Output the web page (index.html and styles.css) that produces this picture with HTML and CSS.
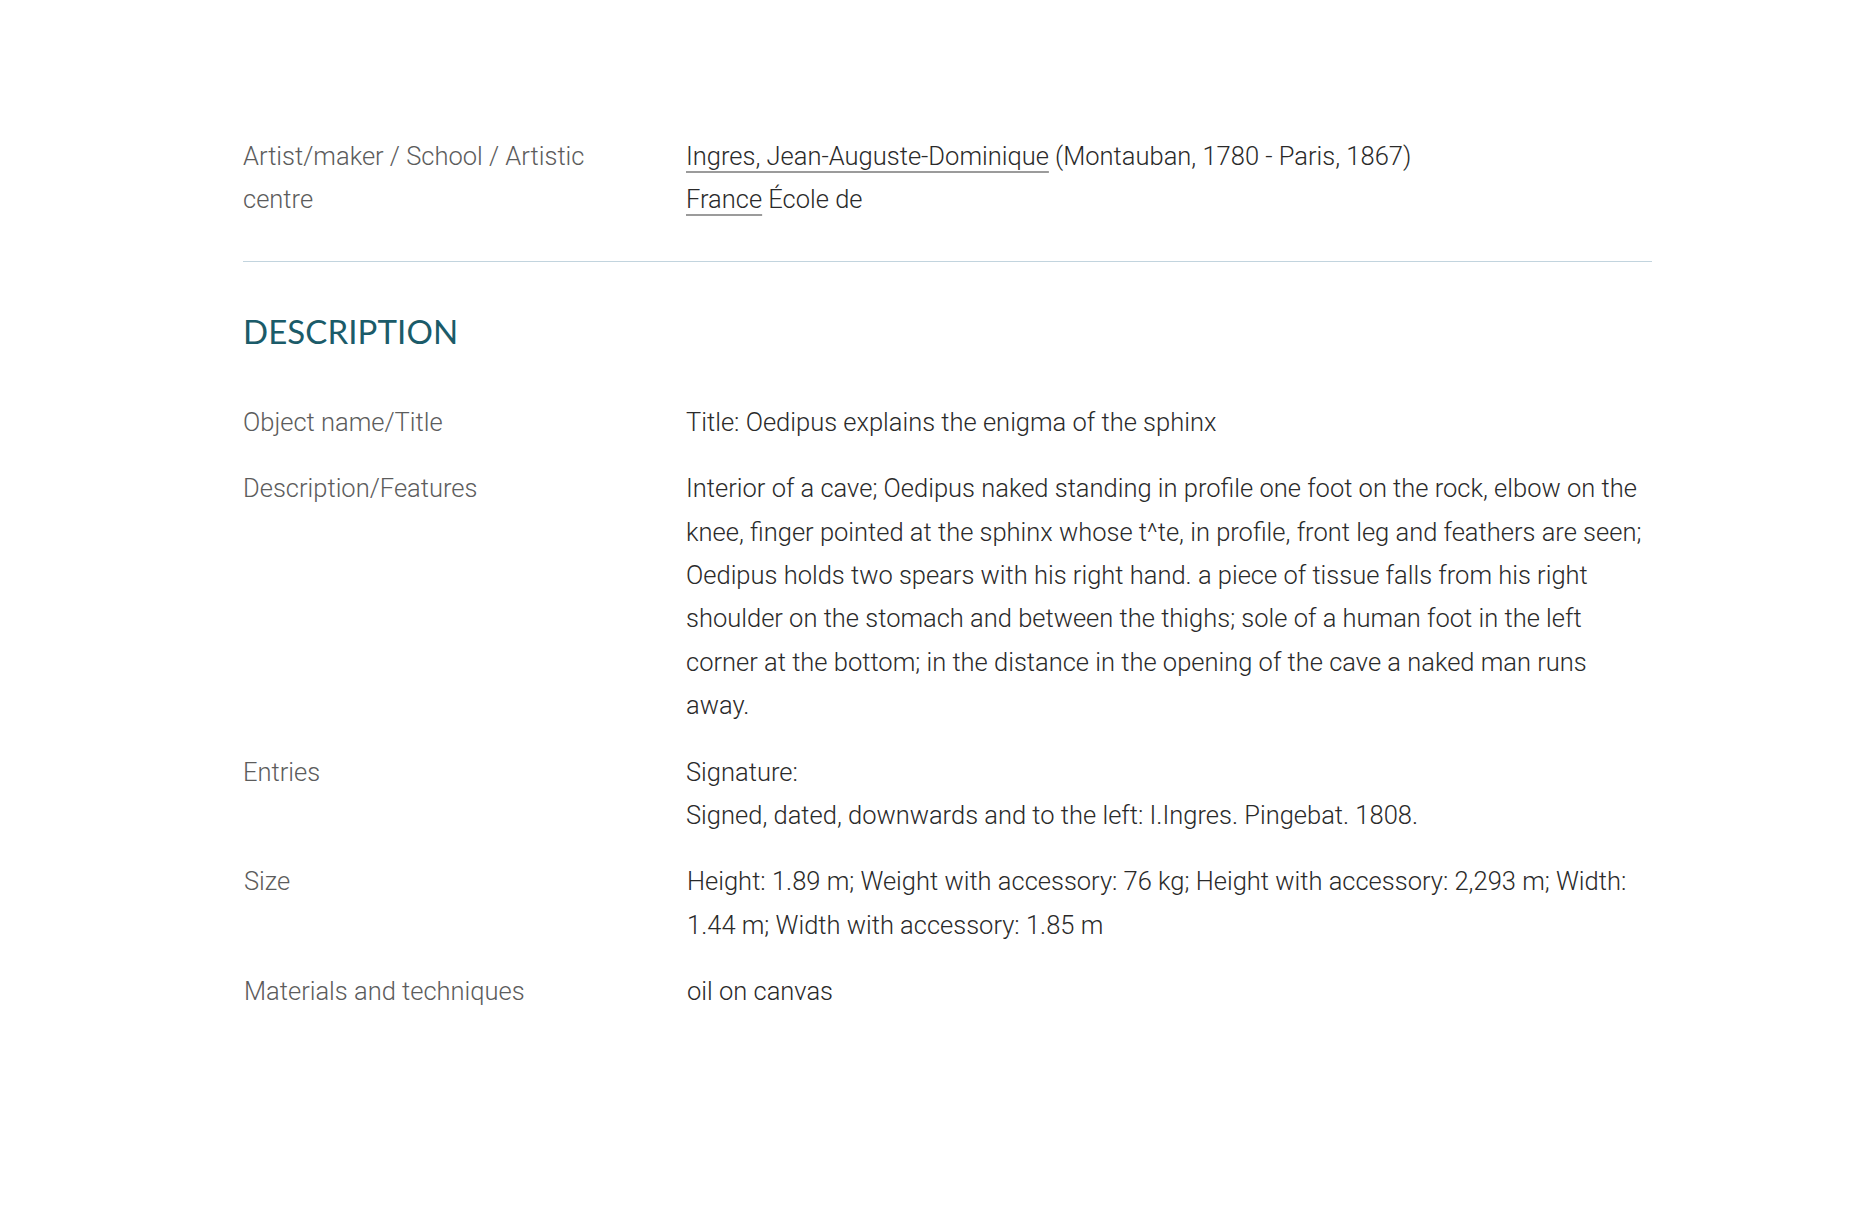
FILE: index.html
```html
<!DOCTYPE html>
<html>
<head>
  <title>Oedipus explains the enigma of the sphinx</title>
  <link rel="stylesheet" href="styles.css">
</head>
<body>
  <div class="record">

    <div class="record-section">
      <dl class="fields">
        <div class="field">
          <dt>Artist/maker / School / Artistic centre</dt>
          <dd>
            <p><a href="#">Ingres, Jean-Auguste-Dominique</a> (Montauban, 1780 - Paris, 1867)</p>
            <p><a href="#">France</a> École de</p>
          </dd>
        </div>
      </dl>
    </div>

    <div class="record-section">
      <h2>DESCRIPTION</h2>
      <dl class="fields">
        <div class="field">
          <dt>Object name/Title</dt>
          <dd><p>Title: Oedipus explains the enigma of the sphinx</p></dd>
        </div>
        <div class="field">
          <dt>Description/Features</dt>
          <dd><p>Interior of a cave; Oedipus naked standing in profile one foot on the rock, elbow on the knee, finger pointed at the sphinx whose t^te, in profile, front leg and feathers are seen; Oedipus holds two spears with his right hand. a piece of tissue falls from his right shoulder on the stomach and between the thighs; sole of a human foot in the left corner at the bottom; in the distance in the opening of the cave a naked man runs away.</p></dd>
        </div>
        <div class="field">
          <dt>Entries</dt>
          <dd>
            <p>Signature:</p>
            <p>Signed, dated, downwards and to the left: I.Ingres. Pingebat. 1808.</p>
          </dd>
        </div>
        <div class="field shifted">
          <dt>Size</dt>
          <dd><p>Height: 1.89 m; Weight with accessory: 76 kg; Height with accessory: 2,293 m; Width: 1.44 m; Width with accessory: 1.85 m</p></dd>
        </div>
        <div class="field shifted">
          <dt>Materials and techniques</dt>
          <dd><p>oil on canvas</p></dd>
        </div>
      </dl>
    </div>

  </div>
</body>
</html>
```

FILE: styles.css
```css
/* record page */
body {
  margin: 0;
  background: #fff;
  font-family: Roboto, "Liberation Sans", sans-serif;
  font-weight: 300;
  font-size: 25.5px;
  line-height: 43.4px;
  color: #2a2a2a;
}

.record {
  width: 1409px;
  margin-left: 243px;
  padding-top: 135px;
}

.record-section {
  border-bottom: 1px solid #c2d4de;
  padding-bottom: 39px;
}

.record-section:last-child {
  border-bottom: none;
}

.record-section h2 {
  margin: 48px 0 49px;
  font-family: Lato, "Open Sans", sans-serif;
  font-weight: 400;
  font-size: 33px;
  letter-spacing: 0.1px;
  line-height: 42px;
  color: #1b5b69;
}

.fields {
  margin: 0;
}

.field {
  display: grid;
  grid-template-columns: 443px 1fr;
  margin-bottom: 23px;
}

.field:last-child {
  margin-bottom: 0;
}

.field.shifted {
  padding-left: 1px;
}

.field dt {
  color: #5c5c5c;
  padding-right: 60px;
}

.field dd {
  margin: 0;
}

.field dd p {
  margin: 0;
}

.field a {
  color: #2a2a2a;
  text-decoration: underline;
  text-decoration-color: #9b9b9b;
  text-decoration-thickness: 2px;
  text-underline-offset: 6px;
}
```
